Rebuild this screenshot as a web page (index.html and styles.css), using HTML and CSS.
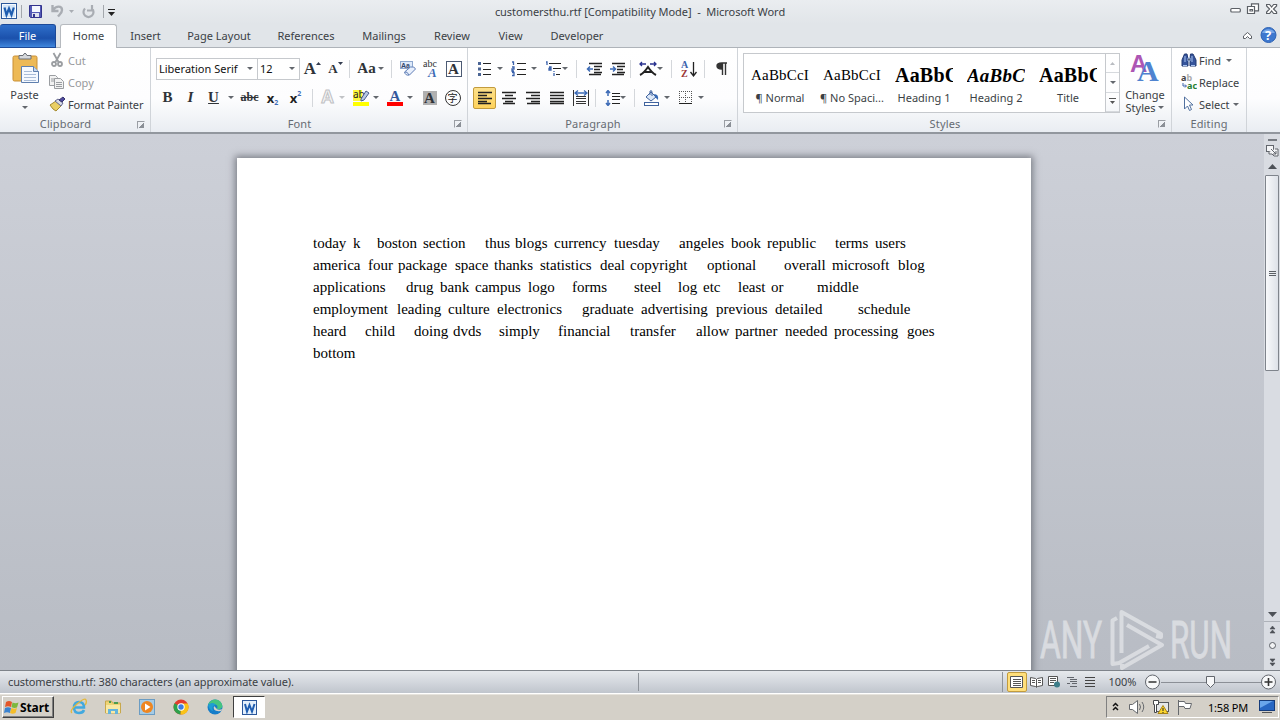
FILE: index.html
```
<!DOCTYPE html>
<html lang="en">
<head>
    <meta charset="UTF-8">
    <meta name="viewport" content="width=device-width, initial-scale=1.0">
    <title>customersthu.rtf [Compatibility Mode] - Microsoft Word</title>
    <link rel="stylesheet" href="styles.css">
</head>
<body>
    <div class="word">
        <!-- Title bar -->
        <header class="titlebar">
            <div class="quick-access">
                <svg width="28" height="22" viewBox="0 0 28 22">
                    <rect x="1.500" y="2.500" width="15" height="15" fill="#f7fbff" stroke="#2b579a"/>
                    <rect x="3" y="4" width="12" height="12" fill="#d5e6f8"/>
                    <path d="M4.500 6.500L6.500 14L9 7.500L11.500 14L13.800 6.500" fill="none" stroke="#1e5db0" stroke-width="2.200"/>
                    <path d="M21.500 4v13" stroke="#a4a8ad"/>
                </svg>
                <svg width="16" height="16" viewBox="0 0 16 16">
                    <path d="M1.500 1.500h12v12h-11l-1-1z" fill="#5359b5" stroke="#33348d"/>
                    <rect x="4" y="2" width="8" height="6" fill="#f5f8ff"/>
                    <rect x="4" y="9" width="7" height="4" fill="#dfe2ee"/>
                    <rect x="5" y="10" width="2" height="3" fill="#33348d"/>
                </svg>
                <svg class="undo" width="28" height="16" viewBox="0 0 28 16">
                    <path d="M1.500 1v6h6M2 6C5 1.500 11 1.500 11 6c0 3-2 4-4 6.500" fill="none" stroke="#a9adb3" stroke-width="2.400"/>
                    <path d="M18 6h5l-2.500 3z" fill="#a9adb3"/>
                </svg>
                <svg width="20" height="16" viewBox="0 0 20 16">
                    <path d="M13 4.500a5 5 0 1 1-7 0M13 1v5.500H8" fill="none" stroke="#a9adb3" stroke-width="2.200"/>
                </svg>
                <svg width="20" height="16" viewBox="0 0 20 16">
                    <path d="M4.500 1v13" stroke="#a4a8ad"/>
                    <path d="M9 5.500h7" stroke="#222"/>
                    <path d="M9 8h7l-3.500 4z" fill="#222"/>
                </svg>
            </div>
            <div class="title">customersthu.rtf [Compatibility Mode] &nbsp;- &nbsp;Microsoft Word</div>
            <div class="window-buttons">
                <svg width="50" height="16" viewBox="0 0 50 16" fill="#fff" stroke="#5c6066" stroke-width="1.200">
                    <rect x=".8" y="5.500" width="9.500" height="3.500" rx="1"/>
                    <path d="M21.500 .8h7v7h-7z"/>
                    <path d="M17.500 3.500h7v7h-7z"/>
                    <path d="M20 6.500h2.500v1.500H20z"/>
                    <path d="M36.600 1.500h3l2 2.500 2-2.500h3v1.500L43.500 6l3.100 3v1.500h-3l-2-2.500-2 2.500h-3V9l3-3-3-3z"/>
                </svg>
            </div>
        </header>

        <!-- Tabs -->
        <nav class="tabs">
            <a class="tab file">File</a>
            <a class="tab home">Home</a>
            <a class="tab insert">Insert</a>
            <a class="tab layout">Page Layout</a>
            <a class="tab references">References</a>
            <a class="tab mailings">Mailings</a>
            <a class="tab review">Review</a>
            <a class="tab view">View</a>
            <a class="tab developer">Developer</a>
            <svg class="help" width="40" height="20" viewBox="0 0 40 20">
                <path d="M3.500 14.500V12l4-3.500 4 3.500v2.500h-2l-2-2-2 2z" fill="#fff" stroke="#5c6066"/>
                <circle cx="28.500" cy="11" r="7.500" fill="#3d78cf" stroke="#2d62b4"/>
                <path d="M22 9a7 6 0 0 1 13 0z" fill="#7aa9e8"/>
                <text x="24.900" y="16" class="help-mark">?</text>
            </svg>
        </nav>

        <!-- Ribbon -->
        <section class="ribbon">
            <div class="group clipboard">
                <div class="group-body">
                    <div class="paste">
                        <svg width="30" height="34" viewBox="0 0 30 34">
                            <rect x="3" y="4" width="24" height="25" rx="1.500" fill="#edb956" stroke="#c98f35"/>
                            <path d="M9 7V3.500h4Q15-1 17 3.500h4V7z" fill="#d5d8dc" stroke="#6c7077"/>
                            <path d="M11.500 14.500h12l5 5v11h-17z" fill="#f5f9ff" stroke="#5f7fae"/>
                            <path d="M23.500 14.500v5h5" fill="#c5d6ec" stroke="#5f7fae"/>
                            <path d="M14 19.500h8M14 22.500h12M14 25.500h12M14 28.500h12" stroke="#a9bcd8"/>
                        </svg>
                        <span>Paste</span>
                        <i class="caret"></i>
                    </div>
                    <div class="clip-list">
                        <div class="command disabled">
                            <svg width="17" height="16" viewBox="0 0 17 16" fill="none" stroke="#9a9da1" stroke-width="1.800">
                                <path d="M4.500 1l5 9M11.500 1L6.500 10"/>
                                <circle cx="5" cy="12" r="2"/><circle cx="11" cy="12" r="2"/>
                            </svg>
                            <span>Cut</span>
                        </div>
                        <div class="command disabled">
                            <svg width="17" height="16" viewBox="0 0 17 16" fill="#f2f2f2" stroke="#9a9da1">
                                <path d="M.5 1.500h6l2 2v8h-8zM2 5h5M2 7h5"/>
                                <path d="M5.500 4.500h6l3 3v7h-9zM7 8.500h6M7 10.500h6M7 12.500h6"/>
                            </svg>
                            <span>Copy</span>
                        </div>
                        <div class="command">
                            <svg width="17" height="16" viewBox="0 0 17 16">
                                <path d="M1 9l6-4 5 5-5 5q-3-1-6-6z" fill="#e9cf64" stroke="#a58b32"/>
                                <path d="M6 5l3-2 5 4-2 3z" fill="#d8dbe8" stroke="#64678d"/>
                                <path d="M10 4l4-3 2 2-3 3z" fill="#504b9d" stroke="#38366f"/>
                            </svg>
                            <span class="painter">Format Painter</span>
                        </div>
                    </div>
                </div>
                <div class="group-label"><span>Clipboard</span><i class="launcher"></i></div>
            </div>

            <div class="group font">
                <div class="group-body">
                    <div class="row">
                        <div class="combo family"><span>Liberation Serif</span><i class="caret"></i></div>
                        <div class="combo size"><span>12</span><i class="caret"></i></div>
                        <span class="tool serif grow">A<svg width="5" height="3"><path d="M0 3h5L2.500 0z" fill="#333c50"/></svg></span>
                        <span class="tool serif shrink">A<svg width="5" height="3"><path d="M0 0h5L2.500 3z" fill="#333c50"/></svg></span>
                        <i class="sep"></i>
                        <span class="tool serif change-case">Aa<i class="caret"></i></span>
                        <i class="sep"></i>
                        <span class="tool">
                            <svg width="16" height="16" viewBox="0 0 16 16">
                                <rect x=".5" y=".5" width="12" height="7" fill="#dfeafa" stroke="#8da7ce"/>
                                <text x="1" y="7" class="tiny">Aa</text>
                                <path d="M4.500 11l6-5q4-1 5 2l-6 6q-4 1-5-3z" fill="#e9f0fc" stroke="#5e7db5"/>
                                <path d="M5 11q2-1 4 3" fill="none" stroke="#5e7db5"/>
                            </svg>
                        </span>
                        <span class="tool">
                            <svg width="16" height="18" viewBox="0 0 16 18">
                                <text x="0" y="7" class="abc">abc</text>
                                <text x="5" y="17" class="phonetic">A</text>
                            </svg>
                        </span>
                        <span class="tool serif"><span class="bordered">A</span></span>
                    </div>
                    <div class="row">
                        <span class="tool serif">B</span>
                        <span class="tool serif italic">I</span>
                        <span class="tool serif underline">U</span>
                        <i class="caret after-u"></i>
                        <span class="tool serif strike">abc</span>
                        <span class="tool script">x<sub>2</sub></span>
                        <span class="tool script">x<sup>2</sup></span>
                        <i class="sep"></i>
                        <span class="tool outline">A</span><i class="caret pale"></i>
                        <span class="tool wide">
                            <svg width="18" height="18" viewBox="0 0 18 18">
                                <path d="M1 1h9v11H1z" fill="#fdf63c"/>
                                <text x="1" y="9" class="mark">ab</text>
                                <path d="M9 10l5-8 3 2-5 7-3 1z" fill="#b8c9e4" stroke="#475d8c"/>
                                <rect x="1" y="13" width="16" height="4" fill="#ff0"/>
                            </svg>
                        </span><i class="caret"></i>
                        <span class="tool wide">
                            <svg width="18" height="18" viewBox="0 0 18 18">
                                <text x="3.500" y="12" class="blue-a">A</text>
                                <rect x="1" y="13" width="16" height="4" fill="#f00"/>
                            </svg>
                        </span><i class="caret"></i>
                        <span class="tool serif shade-cell"><span class="shaded">A</span></span>
                        <span class="tool"><span class="enclosed">字</span></span>
                    </div>
                </div>
                <div class="group-label"><span>Font</span><i class="launcher"></i></div>
            </div>

            <div class="group paragraph">
                <div class="group-body">
                    <div class="row">
                        <span class="tool">
                            <svg width="16" height="16" viewBox="0 0 16 16">
                                <path d="M1 2.500h3M1 8h3M1 13.500h3" stroke="#4a6494" stroke-width="3"/>
                                <path d="M6 2.500h8M6 8.500h8M6 13.500h8" stroke="#222" stroke-width="1.200"/>
                            </svg>
                        </span><i class="caret"></i>
                        <span class="tool">
                            <svg width="16" height="16" viewBox="0 0 16 16">
                                <path d="M1 1h1.500v3M1 6h2v2H1v2h2M1 11.500h2v3H1" fill="none" stroke="#3b62ac" stroke-width="1.300"/>
                                <path d="M6 2.500h9M6 8.500h9M6 13.500h9" stroke="#222" stroke-width="1.200"/>
                            </svg>
                        </span><i class="caret"></i>
                        <span class="tool">
                            <svg width="16" height="16" viewBox="0 0 16 16">
                                <path d="M1 1h1v3M4 6h2v3H4V7.500h2M9 10v1M9 12v3" fill="none" stroke="#3b62ac" stroke-width="1.300"/>
                                <path d="M4 2.500h12M8 7.500h8M11 13.500h4" stroke="#222" stroke-width="1.200"/>
                            </svg>
                        </span><i class="caret tight"></i>
                        <i class="sep"></i>
                        <span class="tool">
                            <svg width="16" height="16" viewBox="0 0 16 16">
                                <path d="M3 2.500h13M8 5.500h8M8 8.500h6M8 11.500h8M3 13.500h12" stroke="#222" stroke-width="1.300"/>
                                <path d="M7 8H2M4 5.500L1.500 8 4 10.500" fill="none" stroke="#3d6bb6" stroke-width="1.500"/>
                            </svg>
                        </span>
                        <span class="tool">
                            <svg width="16" height="16" viewBox="0 0 16 16">
                                <path d="M3 2.500h13M8 5.500h8M8 8.500h6M8 11.500h8M3 13.500h12" stroke="#222" stroke-width="1.300"/>
                                <path d="M1 8h5M4 5.500L6.500 8 4 10.500" fill="none" stroke="#3d6bb6" stroke-width="1.500"/>
                            </svg>
                        </span>
                        <i class="sep close"></i>
                        <span class="tool">
                            <svg width="18" height="16" viewBox="0 0 18 16">
                                <path d="M1 14Q5 12 9 6Q13 12 17 14M5 11h8" fill="none" stroke="#222" stroke-width="2"/>
                                <path d="M1 3h6M11 3h6M3 1L1 3l2 2M15 1l2 2-2 2" fill="none" stroke="#28318e" stroke-width="1.300"/>
                            </svg>
                        </span><i class="caret tight"></i>
                        <i class="sep"></i>
                        <span class="tool">
                            <svg width="16" height="18" viewBox="0 0 16 18">
                                <text x="0" y="8" class="sort-a">A</text>
                                <text x="0" y="17" class="sort-z">Z</text>
                                <path d="M12.500 2v13M9.500 12l3 4 3-4" fill="none" stroke="#222" stroke-width="1.300"/>
                            </svg>
                        </span>
                        <i class="sep"></i>
                        <span class="tool">
                            <svg width="12" height="16" viewBox="0 0 12 16">
                                <path d="M6 8Q1 8 1 5t5-3h5M6.500 2v12M9.500 2v12" fill="none" stroke="#333" stroke-width="1.400"/>
                                <path d="M6 2Q1 2 1 5t5 3z" fill="#333"/>
                            </svg>
                        </span>
                    </div>
                    <div class="row">
                        <span class="tool align selected">
                            <svg width="16" height="16" viewBox="0 0 16 16"><path d="M1 2.500h14M1 5.500h9M1 8.500h14M1 11.500h9M1 13.500h13" stroke="#222" stroke-width="1.300"/></svg>
                        </span>
                        <span class="tool align">
                            <svg width="16" height="16" viewBox="0 0 16 16"><path d="M1 2.500h14M4 5.500h8M1 8.500h14M4 11.500h8M2 13.500h12" stroke="#222" stroke-width="1.300"/></svg>
                        </span>
                        <span class="tool align">
                            <svg width="16" height="16" viewBox="0 0 16 16"><path d="M1 2.500h14M6 5.500h9M1 8.500h14M6 11.500h9M2 13.500h13" stroke="#222" stroke-width="1.300"/></svg>
                        </span>
                        <span class="tool align">
                            <svg width="16" height="16" viewBox="0 0 16 16"><path d="M1 2.500h14M1 5.500h14M1 8.500h14M1 11.500h14M1 13.500h14" stroke="#222" stroke-width="1.300"/></svg>
                        </span>
                        <span class="tool align">
                            <svg width="16" height="16" viewBox="0 0 16 16">
                                <path d="M.5 0v16M15.500 0v16M3 6.500h10M3 8.500h10M3 11.500h10M3 13.500h10" stroke="#333"/>
                                <path d="M2 3h12M5 .5L2 3l3 2.500M11 .5L14 3l-3 2.500" fill="none" stroke="#3d6bb6" stroke-width="1.300"/>
                            </svg>
                        </span>
                        <i class="sep close"></i>
                        <span class="tool">
                            <svg width="16" height="16" viewBox="0 0 16 16">
                                <path d="M7 3.500h8M7 6.500h8M7 9.500h8M7 13.500h8" stroke="#222"/>
                                <path d="M3 0v6M1 3l2-2.500L5 3M3 10v6M1 13l2 2.500L5 13" fill="none" stroke="#3d6bb6" stroke-width="1.500"/>
                            </svg>
                        </span><i class="caret tighter"></i>
                        <i class="sep"></i>
                        <span class="tool">
                            <svg width="17" height="16" viewBox="0 0 17 16">
                                <path d="M3 7l5-5 5 5-5 4z" fill="#dce8f8" stroke="#40639e"/>
                                <path d="M7 5V1q2-1 2 1v4" fill="none" stroke="#40639e"/>
                                <path d="M11 4q5 0 4 6-2-2-3-3z" fill="#3568b4"/>
                                <rect x="1.500" y="12.500" width="14" height="3" fill="#fff" stroke="#40639e"/>
                            </svg>
                        </span><i class="caret"></i>
                        <span class="tool">
                            <svg width="15" height="15" viewBox="0 0 15 15">
                                <path d="M1.500 1v12M7.500 1v12M13.500 1v12M1 1.500h13M1 7.500h13" stroke="#555" stroke-dasharray="1 1"/>
                                <path d="M1 13.500h13" stroke="#222"/>
                            </svg>
                        </span><i class="caret"></i>
                    </div>
                </div>
                <div class="group-label"><span>Paragraph</span><i class="launcher"></i></div>
            </div>

            <div class="group styles">
                <div class="group-body">
                    <div class="gallery">
                        <div class="style"><span class="preview">AaBbCcI</span><span class="style-name">¶ Normal</span></div>
                        <div class="style"><span class="preview">AaBbCcI</span><span class="style-name">¶ No Spaci...</span></div>
                        <div class="style"><span class="preview heading">AaBbC</span><span class="style-name">Heading 1</span></div>
                        <div class="style"><span class="preview heading oblique">AaBbCc</span><span class="style-name">Heading 2</span></div>
                        <div class="style"><span class="preview heading">AaBbC</span><span class="style-name">Title</span></div>
                    </div>
                    <div class="gallery-scroll">
                        <span><svg width="5" height="3"><path d="M0 3h5L2.500 0z" fill="#b9bcc1"/></svg></span>
                        <span><i class="caret"></i></span>
                        <span><svg width="7" height="7"><path d="M0 .5h7" stroke="#555"/><path d="M1 3h5L3.500 6z" fill="#555"/></svg></span>
                    </div>
                    <div class="change-styles">
                        <svg width="30" height="30" viewBox="0 0 30 30">
                            <text x="0" y="19" class="purple-a">A</text>
                            <text x="7" y="28" class="big-a">A</text>
                        </svg>
                        <span>Change</span>
                        <span>Styles<i class="caret"></i></span>
                    </div>
                </div>
                <div class="group-label"><span>Styles</span><i class="launcher"></i></div>
            </div>

            <div class="group editing">
                <div class="group-body">
                    <div class="command">
                        <svg width="16" height="16" viewBox="0 0 16 16">
                            <path d="M3.500 2h2.500l1 5v7H1V8zM9.500 2H12l3 6v6H9V7z" fill="#35549c" stroke="#233a73"/>
                            <path d="M7 6h2v3H7zM2 13.500h4M10 13.500h4M4 4v6M11 4v6" stroke="#aac4f0"/>
                        </svg>
                        <span>Find</span><i class="caret"></i>
                    </div>
                    <div class="command">
                        <svg width="16" height="16" viewBox="0 0 16 16">
                            <text x="0" y="7" class="replace-ab">a<tspan fill="#aaa">b</tspan></text>
                            <text x="6" y="15" class="replace-ac">ac</text>
                            <path d="M2 9v3h3M4 10.500L5.500 12 4 13.500" fill="none" stroke="#3b62ac"/>
                        </svg>
                        <span class="replace">Replace</span>
                    </div>
                    <div class="command">
                        <svg width="16" height="16" viewBox="0 0 16 16">
                            <path d="M3.500 1v12l3-3 2 4.500 2-1-2-4.500h3.500z" fill="#fff" stroke="#51709f"/>
                        </svg>
                        <span>Select</span><i class="caret near"></i>
                    </div>
                </div>
                <div class="group-label"><span>Editing</span></div>
            </div>
        </section>

        <!-- Document -->
        <main class="workspace">
            <article class="page" id="page"></article>
            <svg class="watermark" width="196" height="64" viewBox="0 0 196 64">
                <g class="mark-letters">
                    <text x="1" y="52" textLength="62" lengthAdjust="spacingAndGlyphs">ANY</text>
                    <text x="131" y="52" textLength="62" lengthAdjust="spacingAndGlyphs">RUN</text>
                </g>
                <g class="mark-logo">
                    <path d="M78 12L73.500 14.500V58L80 57L110 40"/>
                    <path d="M82.500 47V6L122 28V31L117 30"/>
                    <path d="M88 19L123 39L83 62V58"/>
                </g>
            </svg>
            <aside class="scrollbar">
                <i class="split"></i>
                <svg width="14" height="14" viewBox="0 0 14 14" fill="#f4f5f7" stroke="#62666d">
                    <rect x="1.500" y="1.500" width="7" height="6"/><path d="M4 8v2h3l2 2h4V5h-3M6 5l5 5M11 7v3H8"/>
                </svg>
                <svg class="up" width="9" height="5"><path d="M0 5h9L4.500 0z" fill="#4d5157"/></svg>
                <div class="thumb"><i></i><i></i><i></i></div>
                <div class="browse">
                    <svg width="16" height="60" viewBox="0 0 16 60" fill="#4d5157">
                        <path d="M4 2h9L8.500 7z"/>
                        <path d="M0 11.500h16" stroke="#aeb2b9"/>
                        <path d="M6 19h5L8.500 16zM6 23h5L8.500 20z" stroke="#4d5157" stroke-width=".6"/>
                        <circle cx="8.500" cy="35.500" r="3" fill="#f1f2f4" stroke="#5c6066"/>
                        <path d="M6 49h5l-2.500 3zM6 53h5l-2.500 3z" stroke="#4d5157" stroke-width=".6"/>
                    </svg>
                </div>
            </aside>
        </main>

        <!-- Status bar -->
        <footer class="status">
            <span class="status-text">customersthu.rtf: 380 characters (an approximate value).</span>
            <div class="views">
                <span class="view-button active"><svg width="14" height="12"><path d="M.5.500h12v11H.5z" fill="#fff" stroke="#555"/><path d="M3 3.500h8M3 5.500h8M3 7.500h8M3 9.500h8" stroke="#555"/></svg></span>
                <span class="view-button"><svg width="13" height="12"><path d="M.5 1.500l5 1 1 1 1-1 5-1v8l-5 1-1 1-1-1-5-1zM6.500 3v8" fill="#fff" stroke="#555"/><path d="M2 4.500h3M2 6.500h3M8 4.500h3M8 6.500h3" stroke="#555"/></svg></span>
                <span class="view-button"><svg width="13" height="12"><path d="M.5.500h9v9h-9z" fill="#fff" stroke="#555"/><path d="M2 2.500h6M2 4.500h6M2 6.500h4" stroke="#555"/><circle cx="9" cy="8.500" r="3" fill="#3d7d89"/></svg></span>
                <span class="view-button"><svg width="12" height="12"><path d="M1 1.500h7M4 3.500h7M4 5.500h7M1 7.500h3M6 7.500h5M4 10.500h7" stroke="#62666d"/></svg></span>
                <span class="view-button"><svg width="12" height="12"><path d="M1 1.500h10M1 4.500h10M1 7.500h10M1 10.500h10" stroke="#444"/></svg></span>
            </div>
            <span class="zoom-value">100%</span>
            <svg width="136" height="18" viewBox="0 0 136 18">
                <path d="M17 9.500h102" stroke="#8b8f96"/>
                <g fill="#f7f8f9" stroke="#62666d">
                    <circle cx="8.500" cy="9" r="7"/>
                    <circle cx="124.500" cy="9" r="7"/>
                    <path d="M62.500 3.500h8v7l-4 4-4-4z"/>
                </g>
                <path d="M4.500 9h8M120.500 9h8M124.500 5v8" stroke="#333" stroke-width="1.600"/>
            </svg>
        </footer>

        <!-- Taskbar -->
        <footer class="taskbar">
            <button class="start">
                <svg width="15" height="15" viewBox="0 0 15 15">
                    <path d="M2 2q3-2 6 0L7 7Q4 5.500 1 7z" fill="#e4572a"/>
                    <path d="M8.500 2.500q3 1.500 6 0L13 7.500q-3 1-5.500-.5z" fill="#7cb83c"/>
                    <path d="M1 8q3-1.500 6 0l-1 5q-3-1.500-6 0z" fill="#3b83d0"/>
                    <path d="M7.500 8q3 1.500 5.500 0l-1.500 5q-3 1.500-5.500 0z" fill="#f5bd28"/>
                </svg>
                <span>Start</span>
            </button>
            <div class="apps">
                <svg width="18" height="18" viewBox="0 0 18 18">
                    <path d="M4 9.500h10Q14 4 9 4T4 9.500 9 15q4 0 5-3" fill="none" stroke="#42a9df" stroke-width="2.500"/>
                    <path d="M2 15Q-1 13 7 6t9-4-1 5" fill="none" stroke="#e4b83a" stroke-width="1.300"/>
                </svg>
                <svg width="18" height="18" viewBox="0 0 18 18">
                    <path d="M1.500 3h6l1 2h8v10h-15z" fill="#eed577" stroke="#c8a84c"/>
                    <path d="M2 7h14v8H2z" fill="#f8e9a5"/>
                    <path d="M4 16v-5h10v5h-3v-3H7v3z" fill="#64b4dd"/>
                    <path d="M5 4h2M10 5h4" stroke="#4c9b50" stroke-width="2"/>
                </svg>
                <svg width="18" height="18" viewBox="0 0 18 18">
                    <rect x="1.500" y="1.500" width="15" height="15" fill="#a5cbe5" stroke="#6b9cc3"/>
                    <circle cx="9" cy="9" r="6" fill="#ee8621"/>
                    <path d="M7 5.500v7L12.500 9z" fill="#fff"/>
                </svg>
                <svg width="18" height="18" viewBox="0 0 18 18">
                    <circle cx="9" cy="9" r="7.500" fill="#e23c2e"/>
                    <path d="M9 9L2.500 5.300A7.500 7.500 0 0 0 8.500 16.500z" fill="#2da14c"/>
                    <path d="M9 9l-.5 7.500A7.500 7.500 0 0 0 15.700 5.500H9z" fill="#fac317"/>
                    <circle cx="9" cy="9" r="3.700" fill="#fff"/>
                    <circle cx="9" cy="9" r="2.700" fill="#3c7de2"/>
                </svg>
                <svg width="18" height="18" viewBox="0 0 18 18">
                    <circle cx="9" cy="9" r="7.500" fill="#167dc9"/>
                    <path d="M2 7q2-5.500 7.500-5.500t7 6.500q-1 4-6 3 2-2 0-4Q6 4 2 7z" fill="#45c481"/>
                    <path d="M8 8q-2 6 7 5l2-2q-6 2-7-1z" fill="#d4d0c8"/>
                    <path d="M2 7q5-4 8 0-5 0-3 6-4-1-5-6z" fill="#1f9ed3"/>
                </svg>
                <span class="running">
                    <svg width="17" height="17" viewBox="0 0 17 17">
                        <rect x="1.500" y="1.500" width="14" height="14" fill="#e3effb" stroke="#2b579a"/>
                        <path d="M4 5l2 7.500L8.500 6l2.500 6.500L13.500 5" fill="none" stroke="#1e5db0" stroke-width="2"/>
                    </svg>
                </span>
            </div>
            <div class="tray">
                <svg width="86" height="18" viewBox="0 0 86 18">
                    <path d="M6 8L8.500 5.500 11 8M6 12L8.500 9.500 11 12" fill="none" stroke="#111" stroke-width="1.500"/>
                    <path d="M22.500 6.500h3l5-4v13l-5-4h-3z" fill="#fff" stroke="#66696d"/>
                    <path d="M32.500 6q2 3 0 6M35 4q3.500 5 0 10" fill="none" stroke="#66696d"/>
                    <rect x="49.500" y="4.500" width="12" height="9" fill="#e5e7e8" stroke="#55585c"/>
                    <path d="M46.500 2.500h5v4h-2v8h-2v-8h-1z" fill="#fff" stroke="#44474b"/>
                    <path d="M51 15.500h10l-5-8z" fill="#fbd62e" stroke="#a98213"/>
                    <path d="M56 10v3M56 14v1" stroke="#222"/>
                    <path d="M71.500 2v15M71.500 3.500h6l1 2h6l-1.500 5h-5l-1-2h-5.500" fill="#fff" stroke="#66696d"/>
                </svg>
                <span class="clock">1:58 PM</span>
                <svg width="16" height="14" viewBox="0 0 16 14">
                    <rect x=".5" y=".5" width="15" height="10" fill="#2867c3" stroke="#163c7b"/>
                    <path d="M1 1h13L1 8z" fill="#6aa6eb"/>
                    <path d="M3 12.500h10" stroke="#555"/>
                </svg>
            </div>
        </footer>
    </div>

    <script>
        // Each word with the column (in px from the left margin) where it starts
        const lines = [
            [["today", 0], ["k", 40], ["boston", 64], ["section", 110], ["thus", 172], ["blogs", 202], ["currency", 241], ["tuesday", 301], ["angeles", 366], ["book", 418], ["republic", 454], ["terms", 522], ["users", 562]],
            [["america", 0], ["four", 55], ["package", 85], ["space", 142], ["thanks", 181], ["statistics", 227], ["deal", 287], ["copyright", 317], ["optional", 394], ["overall", 471], ["microsoft", 519], ["blog", 585]],
            [["applications", 0], ["drug", 93], ["bank", 127], ["campus", 162], ["logo", 215], ["forms", 259], ["steel", 321], ["log", 365], ["etc", 390], ["least", 425], ["or", 458], ["middle", 504]],
            [["employment", 0], ["leading", 84], ["culture", 135], ["electronics", 184], ["graduate", 269], ["advertising", 328], ["previous", 403], ["detailed", 462], ["schedule", 545]],
            [["heard", 0], ["child", 52], ["doing", 101], ["dvds", 140], ["simply", 186], ["financial", 245], ["transfer", 317], ["allow", 383], ["partner", 422], ["needed", 472], ["processing", 521], ["goes", 594]],
            [["bottom", 0]]
        ];

        const page = document.getElementById("page");

        lines.forEach(function(words) {
            const line = document.createElement("p");
            line.className = "line";
            words.forEach(function(word, i) {
                const span = document.createElement("span");
                span.textContent = word[0];
                if (words[i + 1]) {
                    span.style.width = (words[i + 1][1] - word[1]) + "px";
                }
                line.appendChild(span);
            });
            page.appendChild(line);
        });
    </script>
</body>
</html>
```
FILE: styles.css
```
* {
    box-sizing: border-box;
}

body {
    margin: 0;
    font-family: "Noto Sans", "Open Sans", sans-serif;
    font-size: 11px;
    color: #3b3f45;
    overflow: hidden;
}

svg {
    display: block;
    flex: none;
}

.word {
    width: 1280px;
    height: 720px;
    display: flex;
    flex-direction: column;
}

/* Title bar */
.titlebar {
    height: 24px;
    display: flex;
    background: linear-gradient(#eaedf0, #e1e5e9);
}

.quick-access {
    display: flex;
    width: 440px;
    align-items: center;
}

.undo {
    margin-left: 7px;
}

.title {
    width: 400px;
    text-align: center;
    line-height: 24px;
    letter-spacing: -0.04px;
    white-space: nowrap;
}

.window-buttons {
    margin-left: auto;
    width: 50px;
    padding-top: 3px;
}

/* Tabs */
.tabs {
    height: 24px;
    display: flex;
    background: #e1e5e9;
    border-bottom: 1px solid #aeb3b9;
}

.tab {
    height: 24px;
    line-height: 24px;
    text-align: center;
    white-space: nowrap;
}

.file {
    width: 56px;
    color: #fff;
    background: linear-gradient(#2f6fca, #1b51ac 60%, #3f86dc);
    border: 1px solid #1d4a98;
    border-left: 0;
    border-radius: 3px 3px 0 0;
    line-height: 22px;
}

.home {
    width: 57px;
    margin-left: 4px;
    background: #fff;
    border: 1px solid #b6babf;
    border-bottom: 0;
    border-radius: 3px 3px 0 0;
    line-height: 22px;
}

.insert { width: 57px; }
.layout { width: 90px; }
.references { width: 84px; }
.mailings { width: 72px; }
.review { width: 64px; }
.view { width: 53px; }
.developer { width: 80px; }

.help {
    margin-left: auto;
}

.help-mark {
    font: bold 13px "Noto Sans", sans-serif;
    fill: #fff;
}

/* Ribbon */
.ribbon {
    height: 86px;
    display: flex;
    background: linear-gradient(#fff, #fdfdfe 60%, #e9edf2);
    border-bottom: 2px solid #92979e;
}

.group {
    display: flex;
    flex-direction: column;
    border-right: 1px solid #d0d4d9;
}

.clipboard { width: 151px; }
.font { width: 317px; }
.paragraph { width: 270px; }
.styles { width: 434px; }
.editing { width: 75px; }

.group-body {
    height: 68px;
}

.group-label {
    display: flex;
    align-items: center;
    height: 18px;
    color: #666b72;
}

.group-label span {
    flex: 1;
    padding-right: 6px;
    text-align: center;
    letter-spacing: 0.15px;
}

.editing .group-label span {
    padding-right: 0;
}

.launcher {
    width: 8px;
    height: 8px;
    margin-top: 2px;
    margin-right: 5px;
    border: 1px solid #9a9ea4;
    border-right-color: transparent;
    border-bottom-color: transparent;
    background: linear-gradient(135deg, transparent 55%, #8b9097 55%);
}

.caret {
    width: 0;
    height: 0;
    border: 3px solid transparent;
    border-top-color: #63676d;
    border-bottom: 0;
    flex: none;
}

.caret.pale {
    border-top-color: #c1c3c6;
}

.clipboard .group-body {
    display: flex;
}

.paste {
    width: 49px;
    display: flex;
    flex-direction: column;
    align-items: center;
    padding-top: 4px;
}

.paste span {
    line-height: 18px;
}

.paste .caret {
    margin-top: 2px;
}

.clip-list {
    padding-top: 1px;
}

.command {
    display: flex;
    align-items: center;
    height: 22px;
    white-space: nowrap;
}

.command span {
    margin-left: 2px;
}

.command .caret {
    margin-left: 5px;
}

.command .near {
    margin-left: 3px;
}

.painter {
    letter-spacing: -0.15px;
}

.disabled {
    color: #97999c;
}

.row {
    display: flex;
    align-items: center;
    height: 29px;
}

.font .row,
.paragraph .row {
    padding-left: 5px;
}

.font .row:first-child,
.paragraph .row:first-child {
    margin-top: 6px;
}

.combo {
    display: flex;
    align-items: center;
    justify-content: space-between;
    height: 22px;
    padding: 0 4px 0 2px;
    border: 1px solid #c6c9cd;
    background: #fff;
    color: #111;
}

.family { width: 102px; }

.size {
    width: 43px;
    margin-left: -1px;
    margin-right: 1px;
}

.tool {
    display: flex;
    align-items: center;
    justify-content: center;
    flex: none;
    width: 23px;
    height: 22px;
}

.serif {
    font: bold 15px "Liberation Serif", serif;
    color: #2f3338;
}

.grow { font-size: 17px; }
.shrink { font-size: 13px; }

.grow svg,
.shrink svg {
    margin-bottom: 10px;
}

.sep {
    width: 1px;
    height: 18px;
    margin: 0 2px;
    flex: none;
    background: #d4d7db;
}

.change-case {
    width: 37px;
    gap: 2px;
}

.change-case + .sep {
    margin-right: 4px;
}

.tiny {
    font: bold 7px "Liberation Sans", sans-serif;
    fill: #33466e;
}

.abc {
    font: 10px "Liberation Serif", serif;
    fill: #333;
}

.phonetic {
    font: italic bold 13px "Liberation Serif", serif;
    fill: #3d6bb6;
}

.bordered,
.shaded {
    width: 16px;
    height: 16px;
    line-height: 15px;
    text-align: center;
}

.bordered {
    border: 1px solid #4c5a73;
    line-height: 14px;
}

.shaded {
    width: 14px;
    height: 14px;
    line-height: 14px;
    background: #b0b0b0;
}

.italic { font-style: italic; }
.underline { text-decoration: underline; }

.after-u {
    margin: 0 4px 0 3px;
}

.strike {
    font-size: 12px;
    text-decoration: line-through;
}

.script {
    font: bold 13px "Noto Sans", sans-serif;
    color: #222;
}

.script sub,
.script sup {
    font-size: 7px;
    color: #3d6bb6;
}

.script sub { margin-top: 9px; }
.script sup { margin-bottom: 9px; }

.script + .sep {
    margin: 0 3px 0 5px;
}

.outline {
    font: bold 18px "Liberation Sans", sans-serif;
    color: #f6f6f6;
    -webkit-text-stroke: 1px #bfc1c4;
}

.wide {
    width: 24px;
    margin-left: 4px;
}

.mark {
    font: 10px "Noto Sans", sans-serif;
    fill: #222;
}

.blue-a {
    font: bold 15px "Liberation Serif", serif;
    fill: #34589c;
}

.shade-cell {
    margin-left: 5px;
}

.enclosed {
    width: 16px;
    height: 16px;
    border: 1px solid #333;
    border-radius: 50%;
    font: 10px/14px "Noto Sans CJK SC", sans-serif;
    text-align: center;
    color: #222;
}

.paragraph .caret {
    margin-left: 1px;
    margin-right: 4px;
}

.paragraph .tight {
    margin-left: -2px;
}

.paragraph .tighter {
    margin-left: -4px;
}

.paragraph .sep {
    margin: 0 5px 0 4px;
}

.paragraph .close {
    margin-left: 2px;
}

.align {
    margin-right: 1px;
}

.selected {
    border: 1px solid #c29b3e;
    border-radius: 2px;
    background: linear-gradient(#fce08b, #ffd35c);
}

.sort-a,
.sort-z {
    font: bold 10px "Liberation Serif", serif;
    fill: #3b62ac;
}

.sort-z {
    fill: #9c3636;
}

/* Styles gallery */
.styles .group-body {
    display: flex;
    padding: 5px 0 0 5px;
}

.gallery {
    display: flex;
    width: 363px;
    height: 60px;
    border: 1px solid #c6c9cd;
    background: #fff;
}

.style {
    width: 72px;
    padding: 0 7px;
}

.preview,
.style-name {
    display: block;
    overflow: hidden;
    white-space: nowrap;
}

.preview {
    height: 35px;
    font: 15px/43px "Liberation Serif", serif;
    letter-spacing: 0.2px;
    color: #000;
}

.heading {
    font-weight: bold;
    font-size: 20px;
}

.oblique {
    font-style: italic;
    font-size: 19px;
}

.style-name {
    margin: 0 -6px;
    text-align: center;
    line-height: 18px;
}

.gallery-scroll {
    width: 14px;
    height: 60px;
    display: flex;
    flex-direction: column;
    border: 1px solid #c6c9cd;
    border-left: 0;
}

.gallery-scroll span {
    flex: 1;
    display: flex;
    align-items: center;
    justify-content: center;
    border-bottom: 1px solid #d6d9dd;
}

.change-styles {
    width: 50px;
    display: flex;
    flex-direction: column;
    align-items: center;
}

.change-styles span {
    display: flex;
    align-items: center;
    gap: 3px;
    line-height: 13px;
}

.change-styles svg {
    margin-bottom: 5px;
}

.purple-a {
    font: bold 24px "Liberation Sans", sans-serif;
    fill: #ad56b4;
}

.big-a {
    font: bold 30px "Liberation Serif", serif;
    fill: #4f83d0;
}

.editing .group-body {
    padding: 1px 0 0 9px;
}

.replace-ab,
.replace-ac {
    font: bold 9px "Noto Sans", sans-serif;
    fill: #444;
}

.replace-ac {
    fill: #288033;
}

/* Document */
.workspace {
    position: relative;
    height: 536px;
    display: flex;
    background: linear-gradient(#cdd0d8, #b8bcc4);
    overflow: hidden;
}

.page {
    width: 794px;
    height: 560px;
    margin: 24px 0 0 237px;
    padding: 74px 0 0 76px;
    background: #fff;
    box-shadow: 0 0 7px 2px rgba(70, 74, 82, 0.6);
}

.line {
    display: flex;
    height: 22px;
    margin: 0;
    font: 15px/22px "Liberation Serif", serif;
    color: #000;
    white-space: nowrap;
}

.line span {
    flex: none;
}

.watermark {
    position: absolute;
    left: 1039px;
    top: 472px;
    opacity: 0.75;
}

.mark-letters {
    font: 400 52px Roboto, sans-serif;
    fill: #e4e6e9;
    stroke: #e4e6e9;
    stroke-width: 0.8;
}

.mark-logo {
    fill: none;
    stroke: #e4e6e9;
    stroke-width: 4;
    stroke-linejoin: round;
}

.scrollbar {
    width: 16px;
    margin-left: auto;
    display: flex;
    flex-direction: column;
    align-items: center;
    background: #d9dce2;
}

.split {
    width: 9px;
    height: 2px;
    margin: 5px 0 3px;
    background: #777b82;
}

.up {
    margin: 6px 0 6px;
}

.thumb {
    width: 14px;
    height: 196px;
    display: flex;
    flex-direction: column;
    align-items: center;
    justify-content: center;
    gap: 1px;
    border: 1px solid #7f848c;
    border-radius: 1px;
    background: linear-gradient(90deg, #f8f9fb, #dde1e8);
}

.thumb i {
    width: 7px;
    height: 1px;
    background: #5c6066;
}

.browse {
    margin-top: auto;
}

/* Status bar */
.status {
    height: 24px;
    display: flex;
    align-items: center;
    border-top: 1px solid #7e838a;
    border-bottom: 1px solid #fff;
    background: linear-gradient(#e6e9ed, #c0c5cd);
}

.status-text {
    width: 639px;
    height: 18px;
    line-height: 17px;
    padding-left: 8px;
    letter-spacing: -0.13px;
    border-right: 1px solid #8f949b;
}

.views {
    display: flex;
    height: 20px;
    margin-left: 363px;
    padding-left: 4px;
    border-left: 1px solid #8f949b;
}

.view-button {
    width: 18px;
    height: 20px;
    display: flex;
    align-items: center;
    justify-content: center;
}

.active {
    width: 20px;
    border: 1px solid #c29b3e;
    border-radius: 2px;
    background: #ffdf7b;
}

.zoom-value {
    width: 45px;
    padding-left: 2px;
    padding-bottom: 2px;
    text-align: center;
}

/* Taskbar */
.taskbar {
    height: 26px;
    display: flex;
    align-items: center;
    padding-bottom: 1px;
    background: #d4d0c8;
    border-top: 1px solid #e6e3dd;
}

.start {
    width: 52px;
    height: 22px;
    margin-left: 2px;
    padding: 0 1px;
    display: flex;
    align-items: center;
    gap: 1px;
    border: 1px solid;
    border-color: #fff #404040 #404040 #fff;
    box-shadow: inset -1px -1px #808080;
    background: #d4d0c8;
    font: bold 12px "Noto Sans", sans-serif;
    letter-spacing: -0.1px;
    color: #000;
}

.apps {
    display: flex;
    align-items: center;
    gap: 16px;
    margin-left: 16px;
}

.running {
    width: 32px;
    height: 22px;
    margin-left: -7px;
    display: flex;
    align-items: center;
    justify-content: center;
    border: 1px solid;
    border-color: #404040 #fff #fff #404040;
    background: #fff;
}

.tray {
    display: flex;
    align-items: center;
    width: 173px;
    height: 22px;
    margin-left: auto;
    margin-right: 1px;
    border: 1px solid;
    border-color: #808080 #fff #fff #808080;
}

.clock {
    width: 66px;
    padding-left: 4px;
    text-align: center;
    letter-spacing: -0.2px;
    color: #000;
}
```
